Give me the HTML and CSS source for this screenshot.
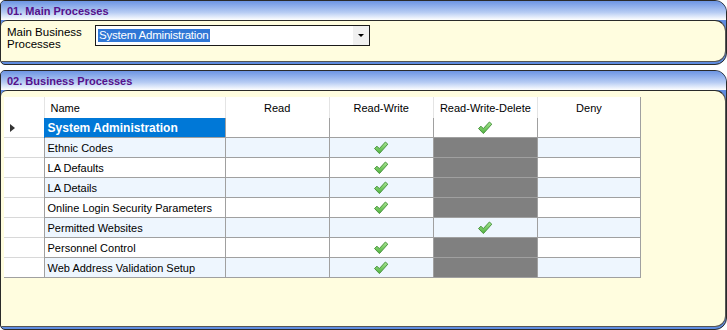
FILE: index.html
```html
<!DOCTYPE html>
<html lang="en">
<head>
    <meta charset="UTF-8">
    <title>Business Processes</title>
    <link rel="stylesheet" href="styles.css">
</head>
<body>
    <svg width="0" height="0" class="defs">
        <defs>
            <linearGradient id="tick" x1="0" y1="0" x2="0" y2="1">
                <stop offset="0" stop-color="#a6e690"/>
                <stop offset="1" stop-color="#4fb23e"/>
            </linearGradient>
            <symbol id="check" viewBox="0 0 16 14">
                <path d="M1.5 7.5 L4 5.2 L6.3 7.6 L12.4 1 L14.8 3.2 L6.4 12.6 Z" fill="url(#tick)" stroke="#4a9440" stroke-width="1" stroke-linejoin="round"/>
            </symbol>
        </defs>
    </svg>

    <div class="panel first">
        <div class="panel-head">01. Main Processes</div>
        <div class="panel-body">
            <div class="field">
                <label>Main Business<br>Processes</label>
                <div class="select">
                    <span class="sel-text">System Administration</span>
                    <span class="drop"></span>
                </div>
            </div>
        </div>
    </div>

    <div class="panel second">
        <div class="panel-head">02. Business Processes</div>
        <div class="panel-body">
            <table class="grid">
                <colgroup>
                    <col class="c-rh">
                    <col class="c-name">
                    <col class="c-perm">
                    <col class="c-perm">
                    <col class="c-perm">
                    <col class="c-deny">
                </colgroup>
                <thead>
                    <tr>
                        <th class="rh"></th>
                        <th class="name">Name</th>
                        <th>Read</th>
                        <th>Read-Write</th>
                        <th>Read-Write-Delete</th>
                        <th>Deny</th>
                    </tr>
                </thead>
                <tbody>
                    <tr>
                        <td class="rh"><span class="arrow"></span></td>
                        <td class="name selected">System Administration</td>
                        <td></td><td></td>
                        <td><svg class="ok"><use href="#check"/></svg></td>
                        <td></td>
                    </tr>
                    <tr class="alt">
                        <td class="rh"></td><td class="name">Ethnic Codes</td>
                        <td></td><td><svg class="ok"><use href="#check"/></svg></td>
                        <td class="off"></td><td></td>
                    </tr>
                    <tr>
                        <td class="rh"></td><td class="name">LA Defaults</td>
                        <td></td><td><svg class="ok"><use href="#check"/></svg></td>
                        <td class="off"></td><td></td>
                    </tr>
                    <tr class="alt">
                        <td class="rh"></td><td class="name">LA Details</td>
                        <td></td><td><svg class="ok"><use href="#check"/></svg></td>
                        <td class="off"></td><td></td>
                    </tr>
                    <tr>
                        <td class="rh"></td><td class="name">Online Login Security Parameters</td>
                        <td></td><td><svg class="ok"><use href="#check"/></svg></td>
                        <td class="off"></td><td></td>
                    </tr>
                    <tr class="alt">
                        <td class="rh"></td><td class="name">Permitted Websites</td>
                        <td></td><td></td>
                        <td><svg class="ok"><use href="#check"/></svg></td><td></td>
                    </tr>
                    <tr>
                        <td class="rh"></td><td class="name">Personnel Control</td>
                        <td></td><td><svg class="ok"><use href="#check"/></svg></td>
                        <td class="off"></td><td></td>
                    </tr>
                    <tr class="alt">
                        <td class="rh"></td><td class="name">Web Address Validation Setup</td>
                        <td></td><td><svg class="ok"><use href="#check"/></svg></td>
                        <td class="off"></td><td></td>
                    </tr>
                </tbody>
            </table>
        </div>
    </div>
</body>
</html>
```

FILE: styles.css
```css
body {
    margin: 0;
    width: 727px;
    height: 330px;
    background: #fff;
    font-family: "Liberation Sans", Arial, sans-serif;
    font-size: 11px;
    color: #000;
    overflow: hidden;
}
.defs {
    position: absolute;
}
.panel {
    width: 725px;
    border: 1px solid #2a2a2a;
    border-radius: 5px 12px 12px 5px;
    background: #5f8ce0;
    padding-bottom: 2px;
    overflow: hidden;
}
.panel.first {
    height: 61px;
    margin-bottom: 5px;
}
.panel.second {
    height: 256px;
}
.panel-head {
    height: 19px;
    padding-left: 6px;
    line-height: 20px;
    font-size: 11px;
    font-weight: bold;
    color: #55108a;
    background: linear-gradient(#6d95e4, #b7ccf3 60%, #fff);
}
.panel-body {
    box-sizing: border-box;
    height: calc(100% - 19px);
    border-top: 1px solid #2a2a2a;
    border-right: 1px solid #555;
    border-bottom: 1px solid #555;
    border-radius: 6px 11px 11px 0;
    background: #fffddf;
}
.field {
    display: flex;
    align-items: flex-start;
    padding: 4px 0 0 6px;
}
.field label {
    width: 88px;
    padding-top: 1px;
    font-size: 11.5px;
    line-height: 12px;
}
.select {
    display: flex;
    align-items: center;
    width: 273px;
    height: 19px;
    border: 1px solid #1a1a1a;
    background: #fff;
}
.sel-text {
    margin-left: 2px;
    padding: 0 1px;
    line-height: 13px;
    font-size: 11.5px;
    letter-spacing: -0.2px;
    color: #fff;
    background: #3077d6;
}
.drop {
    margin-left: auto;
    width: 16px;
    height: 19px;
    background: #f0f0f0;
    position: relative;
}
.drop::after {
    content: "";
    position: absolute;
    left: 5px;
    top: 8px;
    border-left: 3px solid transparent;
    border-right: 3px solid transparent;
    border-top: 3px solid #000;
}
.grid {
    margin: 6px 0 0 3px;
    border-collapse: collapse;
    table-layout: fixed;
    width: 637px;
    border-right: 1px solid #a0a0a0;
    border-bottom: 1px solid #a0a0a0;
}
.c-rh { width: 40px; }
.c-name { width: 181px; }
.c-perm { width: 104px; }
.c-deny { width: 103px; }
.grid th {
    height: 21px;
    padding: 0;
    font-weight: normal;
    background: #fff;
    border-left: 1px solid #e4e4e4;
}
.grid th.rh {
    border-left: none;
}
.grid th.name {
    text-align: left;
    padding-left: 6px;
}
.grid td {
    height: 19px;
    padding: 0;
    text-align: center;
    background: #fff;
    border-top: 1px solid #a0a0a0;
    border-left: 1px solid #a0a0a0;
}
.grid tr:first-child td {
    border-top: none;
}
.grid td.rh {
    border-left: none;
    border-top-color: #d8d8d8;
    text-align: left;
}
.grid tr.alt td {
    background: #eef6fe;
}
.grid tr.alt td.rh {
    background: #fff;
}
.grid td.name {
    text-align: left;
    padding-left: 3px;
}
.grid td.selected {
    background: #0078d7;
    color: #fff;
    font-weight: bold;
    font-size: 12px;
    border-left-color: #0078d7;
}
.grid td.off,
.grid tr.alt td.off {
    background: #808080;
}
.arrow {
    display: block;
    margin-left: 6px;
    width: 0;
    height: 0;
    border-top: 4px solid transparent;
    border-bottom: 4px solid transparent;
    border-left: 5px solid #333;
}
.ok {
    display: block;
    margin: 0 auto;
    width: 16px;
    height: 14px;
}
```
